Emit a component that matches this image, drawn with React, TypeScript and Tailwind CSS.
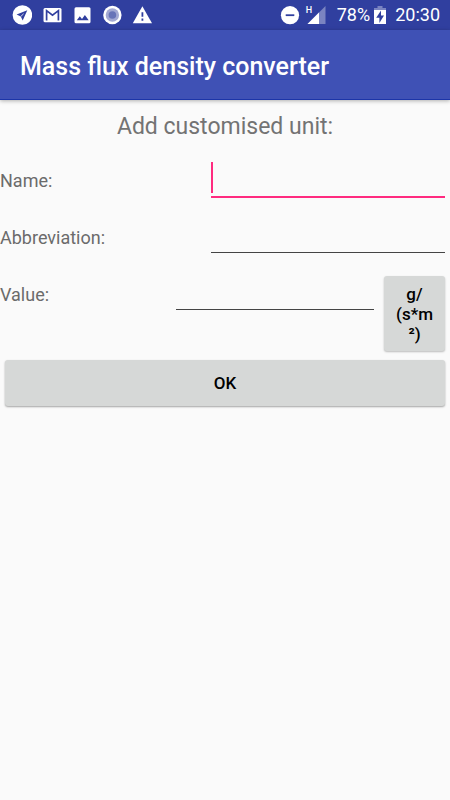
import React from "react";

export default function App() {
  return (
    <div className="min-h-screen w-full bg-[#fafafa] font-['Roboto',sans-serif]">
      <StatusBar />
      <header className="flex h-[70px] items-center border-b border-[#1c35a8] bg-[#3f51b5] px-5 pt-1 shadow-[0_1px_4px_rgba(0,0,0,0.3)]">
        <h1 className="text-[25px] leading-8 font-medium text-white">Mass flux density converter</h1>
      </header>
      <AddUnitForm />
    </div>
  );
}

function AddUnitForm() {
  return (
    <form onSubmit={(e) => e.preventDefault()}>
      <h2 className="pt-[13px] pb-[11px] text-center text-[23px] leading-7 text-[#737373]">Add customised unit:</h2>

      <div className="flex h-[57px] items-start">
        <FieldLabel htmlFor="name" className="w-[211px]">Name:</FieldLabel>
        <div className="relative mr-[5px] flex-1">
          <input
            id="name"
            type="text"
            className="block h-[46px] w-full border-b-2 border-[#ff2a7f] bg-transparent text-lg outline-none"
          />
          <span className="pointer-events-none absolute top-[10px] left-0 h-[31px] w-[2px] bg-[#ff2a7f]" />
        </div>
      </div>

      <div className="flex h-[57px] items-start">
        <FieldLabel htmlFor="abbreviation" className="w-[211px]">Abbreviation:</FieldLabel>
        <TextInput id="abbreviation" className="mr-[5px]" />
      </div>

      <div className="flex items-start">
        <FieldLabel htmlFor="value" className="w-[176px]">Value:</FieldLabel>
        <TextInput id="value" className="mr-[10px]" />
        <button
          type="button"
          className="mt-[10px] mr-[5px] w-[61px] rounded-[3px] bg-[#d6d8d7] px-2 pt-2 pb-[7px] text-center text-[17px] leading-5 font-medium text-black shadow-[0_1px_2px_rgba(0,0,0,0.25)]"
        >
          g/<br />(s*m<br />²)
        </button>
      </div>

      <div className="px-[5px] pt-[9px]">
        <button
          type="submit"
          className="h-[46px] w-full rounded-[3px] bg-[#d6d8d7] pt-[2px] text-[17px] font-medium text-black shadow-[0_1px_2px_rgba(0,0,0,0.35)]"
        >
          OK
        </button>
      </div>
    </form>
  );
}

const FieldLabel = ({
  htmlFor,
  className,
  children,
}: {
  htmlFor: string;
  className: string;
  children: React.ReactNode;
}) => (
  <label htmlFor={htmlFor} className={`shrink-0 pt-[19px] text-[18px] leading-5 text-[#6b6b6b] ${className}`}>
    {children}
  </label>
);

const TextInput = ({ id, className }: { id: string; className: string }) => (
  <input
    id={id}
    type="text"
    className={`h-11 min-w-0 flex-1 border-b border-[#444444] bg-transparent text-lg outline-none ${className}`}
  />
);

function StatusBar() {
  return (
    <div className="flex h-[30px] items-center justify-between bg-[#303f9f] pr-[10px] pl-3 text-white">
      <div className="flex items-center gap-[10px]">
        {/* Telegram */}
        <svg className="h-5 w-5" viewBox="0 0 20 20">
          <circle cx="10.4" cy="10" r="9.8" fill="#fff" />
          <path d="M15.3 5.2 4.6 9.6l4.2 1.9 1.9 4z" fill="#303f9f" />
          <path d="m9 11.3 2.6-2.5" stroke="#fff" strokeWidth="0.8" />
        </svg>
        {/* Gmail */}
        <svg className="h-5 w-5" viewBox="0 0 20 20">
          <rect x="1.5" y="3" width="18" height="14.3" rx="1.5" fill="#fff" />
          <path d="M4.6 15.6V5.6l5.9 4.5 5.9-4.5v10" fill="none" stroke="#303f9f" strokeWidth="1.7" />
        </svg>
        {/* Photo */}
        <svg className="h-5 w-5" viewBox="0 0 20 20">
          <rect x="2.5" y="2.2" width="16" height="16" rx="1.5" fill="#fff" />
          <path d="m4.8 15.3 3-4 2.2 2.6 2.9-3.8 3.8 5.2z" fill="#303f9f" />
        </svg>
        {/* Browser */}
        <svg className="h-5 w-5" viewBox="0 0 20 20">
          <circle cx="10.4" cy="10" r="9.2" fill="#fff" />
          <circle cx="10.4" cy="10" r="6.7" fill="#a3a9d3" />
          <circle cx="10.4" cy="10" r="3.8" fill="#6874b8" />
        </svg>
        {/* Warning */}
        <svg className="h-5 w-5" viewBox="0 0 20 20">
          <path d="M10.4 1.3 20 18.3H.8z" fill="#fff" />
          <path d="M10.4 7.2v4.6M10.4 13.5v2.2" stroke="#303f9f" strokeWidth="1.8" />
        </svg>
      </div>

      <div className="flex items-center">
        <svg className="h-5 w-5" viewBox="0 0 20 20">
          <circle cx="10" cy="10.2" r="9.1" fill="#fff" />
          <path d="M5.7 10.2h8.6" stroke="#303f9f" strokeWidth="1.8" />
        </svg>
        <div className="relative ml-[6px] h-5 w-5">
          <svg className="h-5 w-5" viewBox="0 0 20 20">
            <path d="M19.5 1v18h-18z" fill="#7a84c1" />
            <path d="M13 7.5V19H1.5z" fill="#fff" />
          </svg>
          <span className="absolute top-0 left-0 bg-[#303f9f] text-[9px] leading-[10px] font-medium">H</span>
        </div>
        <span className="ml-[11px] text-[18px] leading-5">78%</span>
        <svg className="ml-1 h-5 w-3" viewBox="0 0 12 20">
          <path d="M3.5 1h5v2H12v2H0V3h3.5z" fill="#7a84c1" />
          <path d="M0 5h12v14H0z" fill="#fff" />
          <path d="M7 5.5 2.2 12.7h3.2V18l4.6-7.4H7z" fill="#303f9f" />
        </svg>
        <span className="ml-[9px] text-[18px] leading-5">20:30</span>
      </div>
    </div>
  );
}
